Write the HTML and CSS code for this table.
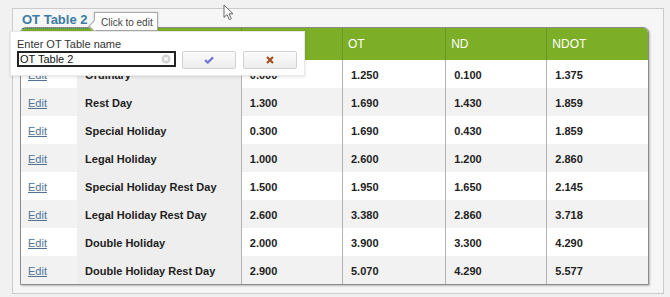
FILE: index.html
```html
<!DOCTYPE html>
<html lang="en">
<head>
  <meta charset="UTF-8" />
  <meta name="viewport" content="width=device-width, initial-scale=1.0" />
  <title>OT Table 2</title>
  <link rel="stylesheet" href="styles.css">
</head>
<body>
  <div class="panel">
    <div class="panel-title"><span class="editable">OT Table 2</span></div>

    <div class="grid-wrap">
      <table class="grid">
        <colgroup>
          <col class="c-edit">
          <col class="c-name">
          <col class="c-num">
          <col class="c-ot">
          <col class="c-num">
          <col class="c-num">
        </colgroup>
        <thead>
          <tr>
            <th></th>
            <th></th>
            <th class="sep"></th>
            <th class="sep">OT</th>
            <th class="sep">ND</th>
            <th class="sep">NDOT</th>
          </tr>
        </thead>
        <tbody>
          <tr><td><a href="#" class="edit">Edit</a></td><td class="name">Ordinary</td><td class="sep">0.000</td><td class="sep">1.250</td><td class="sep">0.100</td><td class="sep">1.375</td></tr>
          <tr><td><a href="#" class="edit">Edit</a></td><td class="name">Rest Day</td><td class="sep">1.300</td><td class="sep">1.690</td><td class="sep">1.430</td><td class="sep">1.859</td></tr>
          <tr><td><a href="#" class="edit">Edit</a></td><td class="name">Special Holiday</td><td class="sep">0.300</td><td class="sep">1.690</td><td class="sep">0.430</td><td class="sep">1.859</td></tr>
          <tr><td><a href="#" class="edit">Edit</a></td><td class="name">Legal Holiday</td><td class="sep">1.000</td><td class="sep">2.600</td><td class="sep">1.200</td><td class="sep">2.860</td></tr>
          <tr><td><a href="#" class="edit">Edit</a></td><td class="name">Special Holiday Rest Day</td><td class="sep">1.500</td><td class="sep">1.950</td><td class="sep">1.650</td><td class="sep">2.145</td></tr>
          <tr><td><a href="#" class="edit">Edit</a></td><td class="name">Legal Holiday Rest Day</td><td class="sep">2.600</td><td class="sep">3.380</td><td class="sep">2.860</td><td class="sep">3.718</td></tr>
          <tr><td><a href="#" class="edit">Edit</a></td><td class="name">Double Holiday</td><td class="sep">2.000</td><td class="sep">3.900</td><td class="sep">3.300</td><td class="sep">4.290</td></tr>
          <tr><td><a href="#" class="edit">Edit</a></td><td class="name">Double Holiday Rest Day</td><td class="sep">2.900</td><td class="sep">5.070</td><td class="sep">4.290</td><td class="sep">5.577</td></tr>
        </tbody>
      </table>
    </div>

    <div class="tip">Click to edit</div>

    <div class="popover">
      <label class="popover-label" for="tname">Enter OT Table name</label>
      <div class="popover-row">
        <div class="field">
          <input type="text" id="tname" class="field-input" value="OT Table 2">
          <svg class="clear" width="10" height="10" viewBox="0 0 10 10">
            <circle cx="5" cy="5" r="4.5" fill="#d3d3d3"/>
            <path d="M3.2 3.2 L6.8 6.8 M6.8 3.2 L3.2 6.8" stroke="#fff" stroke-width="1.3"/>
          </svg>
        </div>
        <button type="button" class="btn btn-ok">
          <svg width="10" height="8" viewBox="0 0 10 8">
            <path d="M1 4.2 L3.8 6.6 L9 1.4" fill="none" stroke="#7376d4" stroke-width="2.2"/>
          </svg>
        </button>
        <button type="button" class="btn btn-cancel">
          <svg width="8" height="8" viewBox="0 0 8 8">
            <path d="M1 1 L7 7 M7 1 L1 7" stroke="#a4501c" stroke-width="2.2"/>
          </svg>
        </button>
      </div>
    </div>
  </div>

  <svg class="cursor" width="12" height="17" viewBox="0 0 12 17">
    <path d="M1 1 L1 13.5 L4 10.6 L6.3 15.6 L8.3 14.7 L6 9.8 L10 9.8 Z" fill="#fff" stroke="#666" stroke-width="1"/>
  </svg>
</body>
</html>
```

FILE: styles.css
```css
body {
  margin: 0;
  background: #f1f1f1;
  font-family: "Liberation Sans", Arial, sans-serif;
}

.panel {
  position: relative;
  box-sizing: border-box;
  width: 652px;
  height: 286px;
  margin: 8px 0 0 12px;
  padding: 1px 14px 0 7px;
  background: #f6f6f6;
  border: 1px solid #cbcbcb;
}

.panel-title {
  height: 17px;
  padding-left: 2px;
}

.editable {
  display: inline-block;
  font-size: 13px;
  font-weight: bold;
  line-height: 16px;
  color: #3b7ba4;
  border-bottom: 1px dotted #3b7ba4;
}

.grid-wrap {
  width: 627px;
  border: 1px solid #8c8c8c;
  border-radius: 6px 6px 0 0;
  overflow: hidden;
  background: #fff;
  box-shadow: 1px 1px 2px rgba(0, 0, 0, 0.25);
}

.grid {
  width: 627px;
  border-collapse: collapse;
  table-layout: fixed;
}

.c-edit { width: 56px; }
.c-name { width: 164px; }
.c-num { width: 101px; }
.c-ot { width: 103px; }

.grid th {
  height: 32px;
  padding: 0 5px;
  background: #7cae27;
  color: #fff;
  font-size: 12px;
  font-weight: normal;
  text-align: left;
}

.grid th.sep {
  border-left: 1px solid #6a9820;
}

.grid td {
  height: 27px;
  padding: 1px 8px 0;
  font-size: 11px;
  font-weight: bold;
  color: #222;
  background: #fff;
  white-space: nowrap;
}

.grid td:first-child {
  padding-left: 7px;
}

.grid tbody tr:nth-child(even) td {
  background: #f2f2f2;
}

.grid td.name,
.grid tbody tr:nth-child(even) td.name {
  background: #eeeeee;
}

.grid td.sep {
  border-left: 1px solid #b2b2b2;
}

.edit {
  color: #4f7398;
  font-weight: normal;
  text-decoration: underline;
}

.tip {
  position: absolute;
  left: 81px;
  top: 3px;
  box-sizing: border-box;
  height: 19px;
  padding: 4px 4px 0 6px;
  font-size: 10px;
  line-height: 12px;
  color: #444;
  background: #fff;
  border: 1px solid #a9a9a9;
  box-shadow: 0 0 2px rgba(0, 0, 0, 0.2);
}

.tip::before {
  content: "";
  position: absolute;
  left: -5px;
  top: 9px;
  width: 7px;
  height: 7px;
  background: #fff;
  border-left: 1px solid #a9a9a9;
  border-bottom: 1px solid #a9a9a9;
  transform: rotate(45deg);
}

.popover {
  position: absolute;
  left: -3px;
  top: 22px;
  box-sizing: border-box;
  width: 295px;
  height: 45px;
  padding: 6px 6px 5px;
  background: #fff;
  border: 1px solid #e8e8e8;
  box-shadow: 0 1px 3px rgba(0, 0, 0, 0.12);
}

.popover-label {
  display: block;
  font-size: 11px;
  line-height: 13px;
  color: #333;
}

.popover-row {
  display: flex;
  align-items: flex-start;
}

.field {
  position: relative;
  box-sizing: border-box;
  width: 159px;
  height: 16px;
  border: 2px solid #222;
  background: #fff;
}

.field-input {
  display: block;
  box-sizing: border-box;
  width: 100%;
  height: 12px;
  padding: 0 14px 0 1px;
  margin: 0;
  border: none;
  outline: none;
  background: transparent;
  font-family: "Liberation Sans", Arial, sans-serif;
  font-size: 11px;
  line-height: 12px;
  color: #111;
}

.clear {
  position: absolute;
  right: 3px;
  top: 1px;
}

.btn {
  display: flex;
  align-items: center;
  justify-content: center;
  box-sizing: border-box;
  width: 54px;
  height: 18px;
  padding: 0;
  margin-left: 6px;
  background: linear-gradient(#fbfbfb, #ededed);
  border: 1px solid #d2d2d2;
  border-radius: 2px;
}

.btn-cancel {
  margin-left: 7px;
}

.cursor {
  position: absolute;
  left: 223px;
  top: 4px;
}
```
